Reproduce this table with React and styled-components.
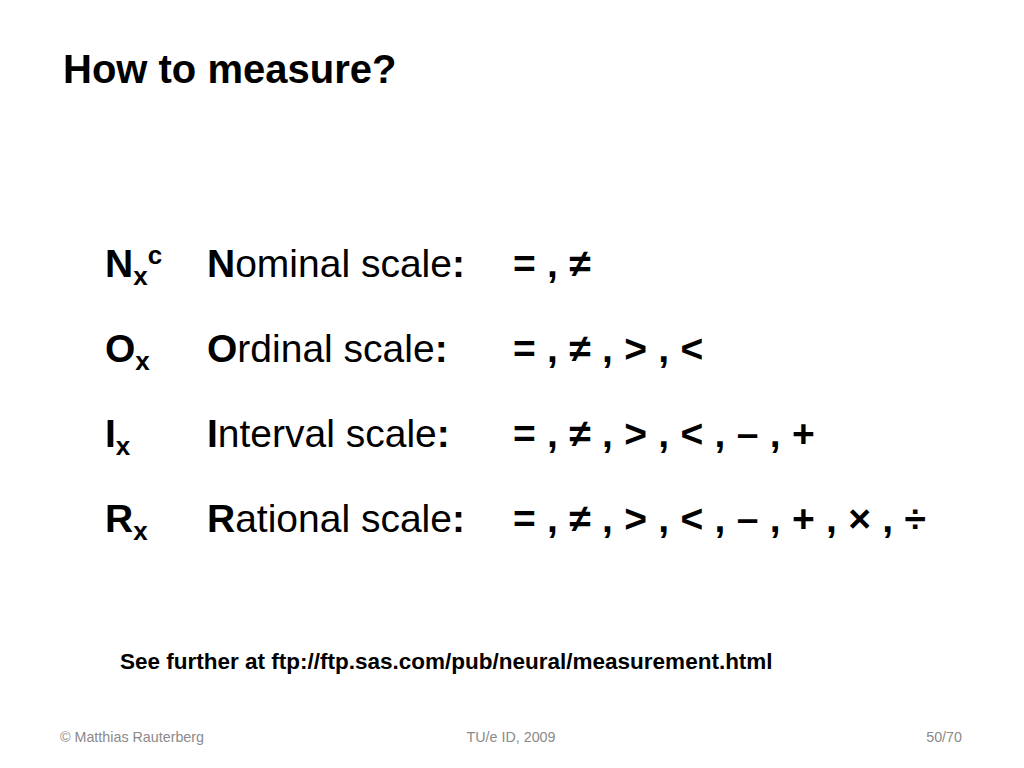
import React from "react";
import styled, { createGlobalStyle } from "styled-components";

const GlobalStyle = createGlobalStyle`
  html, body {
    margin: 0;
    padding: 0;
    background: #ffffff;
  }
  body {
    font-family: "Liberation Sans", Arial, Helvetica, sans-serif;
    color: #000000;
  }
`;

const Slide = styled.div`
  width: 1024px;
  height: 768px;
  display: flex;
  flex-direction: column;
  background: #ffffff;
  overflow: hidden;
`;

const Title = styled.h1`
  margin: 46px 0 0 63px;
  font-size: 40px;
  line-height: 46px;
  font-weight: bold;
`;

const ScaleGrid = styled.div`
  margin: 148px 0 0 105px;
  display: grid;
  grid-template-columns: 102px 306px auto;
  grid-auto-rows: 48px;
  row-gap: 37px;
  font-size: 39px;
  line-height: 48px;
  white-space: nowrap;
`;

const Symbol = styled.div`
  font-weight: bold;
`;

const Sub = styled.sub`
  font-size: 26px;
  vertical-align: -8px;
  line-height: 0;
`;

const Sup = styled.sup`
  font-size: 26px;
  vertical-align: 13px;
  line-height: 0;
`;

const Label = styled.div`
  font-weight: normal;
  & b {
    font-weight: bold;
  }
`;

const Ops = styled.div`
  font-weight: bold;
  word-spacing: 0.5px;
`;

const Note = styled.p`
  margin: 106px 0 0 120px;
  font-size: 22.5px;
  line-height: 26px;
  font-weight: bold;
`;

const Footer = styled.div`
  margin-top: auto;
  height: 39px;
  display: grid;
  grid-template-columns: 1fr auto 1fr;
  align-items: start;
  padding: 0 62px 0 60px;
  font-size: 14.3px;
  line-height: 16px;
  color: #8a8a8a;
`;

const FootCell = styled.div`
  text-align: ${({ $align }) => $align || "left"};
`;

const rows = [
  { sym: "N", sup: "c", first: "N", rest: "ominal scale", ops: "= , ≠" },
  { sym: "O", first: "O", rest: "rdinal scale", ops: "= , ≠ , > , <" },
  { sym: "I", first: "I", rest: "nterval scale", ops: "= , ≠ , > , < , – , +" },
  { sym: "R", first: "R", rest: "ational scale", ops: "= , ≠ , > , < , – , + , × , ÷" },
];

export default function App() {
  return (
    <Slide>
      <GlobalStyle />
      <Title>How to measure?</Title>
      <ScaleGrid>
        {rows.map((r) => (
          <React.Fragment key={r.sym}>
            <Symbol>
              {r.sym}
              <Sub>x</Sub>
              {r.sup && <Sup>{r.sup}</Sup>}
            </Symbol>
            <Label>
              <b>{r.first}</b>
              {r.rest}
              <b>:</b>
            </Label>
            <Ops>{r.ops}</Ops>
          </React.Fragment>
        ))}
      </ScaleGrid>
      <Note>See further at ftp://ftp.sas.com/pub/neural/measurement.html</Note>
      <Footer>
        <FootCell>© Matthias Rauterberg</FootCell>
        <FootCell $align="center">TU/e ID, 2009</FootCell>
        <FootCell $align="right">50/70</FootCell>
      </Footer>
    </Slide>
  );
}
